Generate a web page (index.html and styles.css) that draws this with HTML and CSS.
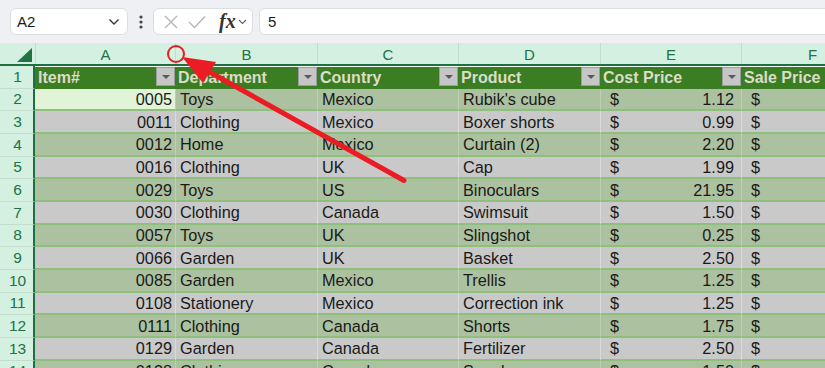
FILE: index.html
```html
<!DOCTYPE html>
<html lang="en">
<head>
    <meta charset="UTF-8">
    <title>Inventory</title>
    <link rel="stylesheet" href="styles.css">
</head>
<body>
    <!-- formula bar -->
    <div class="toolbar">
        <div class="namebox">
            <span>A2</span>
            <svg class="chev" width="12" height="8" viewBox="0 0 12 8"><path d="M1.5 1.5 L6 6 L10.5 1.5" fill="none" stroke="#333" stroke-width="1.4"/></svg>
        </div>
        <div class="more">
            <svg width="4" height="14" viewBox="0 0 4 14"><circle cx="2" cy="2" r="1.6" fill="#444"/><circle cx="2" cy="7" r="1.6" fill="#444"/><circle cx="2" cy="12" r="1.6" fill="#444"/></svg>
        </div>
        <div class="fxbox">
            <svg width="14" height="14" viewBox="0 0 14 14"><path d="M1 1 L13 13 M13 1 L1 13" stroke="#b4b4b4" stroke-width="1.3"/></svg>
            <svg width="18" height="14" viewBox="0 0 18 14"><path d="M1 7 L6.5 12.5 L17 1.5" fill="none" stroke="#b4b4b4" stroke-width="1.3"/></svg>
            <span class="fx">fx</span>
            <svg width="9" height="6" viewBox="0 0 9 6"><path d="M1 1 L4.5 4.5 L8 1" fill="none" stroke="#666" stroke-width="1.2"/></svg>
        </div>
        <div class="formula">5</div>
    </div>

    <!-- sheet -->
    <div class="sheet">
        <div class="row colhead">
            <div class="corner"><span class="tri"></span></div>
            <div>A</div><div>B</div><div>C</div><div>D</div><div>E</div><div>F</div>
        </div>

        <div class="row head">
            <div class="rh">1</div>
            <div class="hc"><span>Item#</span><i class="dd"></i></div>
            <div class="hc"><span>Department</span><i class="dd"></i></div>
            <div class="hc"><span>Country</span><i class="dd"></i></div>
            <div class="hc"><span>Product</span><i class="dd"></i></div>
            <div class="hc"><span>Cost Price</span><i class="dd"></i></div>
            <div class="hc"><span>Sale Price</span><i class="dd"></i></div>
        </div>

        <div class="row green">
            <div class="rh">2</div><div class="num active">0005</div><div>Toys</div><div>Mexico</div><div>Rubik's cube</div>
            <div class="money"><span>$</span><span>1.12</span></div><div class="money"><span>$</span></div>
        </div>
        <div class="row gray">
            <div class="rh">3</div><div class="num">0011</div><div>Clothing</div><div>Mexico</div><div>Boxer shorts</div>
            <div class="money"><span>$</span><span>0.99</span></div><div class="money"><span>$</span></div>
        </div>
        <div class="row green">
            <div class="rh">4</div><div class="num">0012</div><div>Home</div><div>Mexico</div><div>Curtain (2)</div>
            <div class="money"><span>$</span><span>2.20</span></div><div class="money"><span>$</span></div>
        </div>
        <div class="row gray">
            <div class="rh">5</div><div class="num">0016</div><div>Clothing</div><div>UK</div><div>Cap</div>
            <div class="money"><span>$</span><span>1.99</span></div><div class="money"><span>$</span></div>
        </div>
        <div class="row green">
            <div class="rh">6</div><div class="num">0029</div><div>Toys</div><div>US</div><div>Binoculars</div>
            <div class="money"><span>$</span><span>21.95</span></div><div class="money"><span>$</span></div>
        </div>
        <div class="row gray">
            <div class="rh">7</div><div class="num">0030</div><div>Clothing</div><div>Canada</div><div>Swimsuit</div>
            <div class="money"><span>$</span><span>1.50</span></div><div class="money"><span>$</span></div>
        </div>
        <div class="row green">
            <div class="rh">8</div><div class="num">0057</div><div>Toys</div><div>UK</div><div>Slingshot</div>
            <div class="money"><span>$</span><span>0.25</span></div><div class="money"><span>$</span></div>
        </div>
        <div class="row gray">
            <div class="rh">9</div><div class="num">0066</div><div>Garden</div><div>UK</div><div>Basket</div>
            <div class="money"><span>$</span><span>2.50</span></div><div class="money"><span>$</span></div>
        </div>
        <div class="row green">
            <div class="rh">10</div><div class="num">0085</div><div>Garden</div><div>Mexico</div><div>Trellis</div>
            <div class="money"><span>$</span><span>1.25</span></div><div class="money"><span>$</span></div>
        </div>
        <div class="row gray">
            <div class="rh">11</div><div class="num">0108</div><div>Stationery</div><div>Mexico</div><div>Correction ink</div>
            <div class="money"><span>$</span><span>1.25</span></div><div class="money"><span>$</span></div>
        </div>
        <div class="row green">
            <div class="rh">12</div><div class="num">0111</div><div>Clothing</div><div>Canada</div><div>Shorts</div>
            <div class="money"><span>$</span><span>1.75</span></div><div class="money"><span>$</span></div>
        </div>
        <div class="row gray">
            <div class="rh">13</div><div class="num">0129</div><div>Garden</div><div>Canada</div><div>Fertilizer</div>
            <div class="money"><span>$</span><span>2.50</span></div><div class="money"><span>$</span></div>
        </div>
        <div class="row green">
            <div class="rh">14</div><div class="num">0138</div><div>Clothing</div><div>Canada</div><div>Sunglasses</div>
            <div class="money"><span>$</span><span>1.50</span></div><div class="money"><span>$</span></div>
        </div>
    </div>

    <!-- red annotation over the sheet -->
    <svg class="annot" width="825" height="368" viewBox="0 0 825 368">
        <circle cx="176" cy="54" r="8" fill="none" stroke="#ec1c24" stroke-width="2"/>
        <line x1="404" y1="180.5" x2="206" y2="70" stroke="#ec1c24" stroke-width="5" stroke-linecap="round"/>
        <polygon points="182,57 216,62 203,83" fill="#ec1c24"/>
    </svg>
</body>
</html>
```

FILE: styles.css
```css
body {
    margin: 0;
    width: 825px;
    height: 368px;
    overflow: hidden;
    background: #eef0f3;
    font-family: "Liberation Sans", Arial, sans-serif;
    color: #1a1a1a;
    position: relative;
}

/* ---------- formula bar ---------- */
.toolbar {
    height: 43px;
    box-sizing: border-box;
    padding: 8px 0 0 10px;
    display: flex;
    align-items: flex-start;
}

.namebox,
.fxbox,
.formula {
    height: 27px;
    box-sizing: border-box;
    background: #fff;
    border: 1px solid #dcdde0;
    border-radius: 6px;
    display: flex;
    align-items: center;
}

.namebox {
    width: 118px;
    padding: 0 7px 0 6px;
    justify-content: space-between;
    font-size: 15px;
}

.more {
    width: 25px;
    height: 27px;
    display: flex;
    align-items: center;
    justify-content: center;
}

.fxbox {
    width: 100px;
    padding: 0 4px 0 10px;
    gap: 10px;
}

.fx {
    font-family: "Liberation Serif", serif;
    font-style: italic;
    font-weight: bold;
    font-size: 20px;
    color: #333;
    margin-left: 3px;
    margin-right: -8px;
}

.formula {
    flex: 1;
    margin-left: 6px;
    margin-right: -10px;
    padding-left: 8px;
    font-size: 15px;
}

/* ---------- sheet ---------- */
.row {
    display: grid;
    grid-template-columns: 35px 140px 142px 141px 142px 141px 142px;
    height: 22.67px;
    box-sizing: border-box;
    font-size: 16.3px;
}

.row > div {
    display: flex;
    align-items: center;
    padding: 1px 4px 0;
    white-space: nowrap;
    overflow: hidden;
    box-sizing: border-box;
}

.colhead {
    height: 23px;
    background: #d3f0e0;
    border-bottom: 2px solid #1f7040;
    font-size: 15px;
}

.colhead > div {
    justify-content: center;
    color: #217346;
    border-left: 1px solid #c3ddcd;
}

.colhead > .corner {
    border-left: none;
    justify-content: flex-end;
    align-items: flex-end;
    padding: 0 3px 2px 0;
}

.tri {
    width: 0;
    height: 0;
    border-left: 15px solid transparent;
    border-bottom: 14px solid #217346;
}

.rh {
    background: #d3f0e0;
    color: #217346;
    font-size: 15.5px;
    justify-content: center;
    border-right: 2px solid #1f7040;
    border-bottom: 1px solid #c3ddcd;
}

.row > .rh {
    padding: 0 0 0 2px;
}

/* table header row */
.head {
    background: #3b7d23;
    border-top: 1px solid #f4f8f2;
}

.head > .rh {
    margin-top: -1px;
    height: 22.67px;
}

.head > .hc {
    justify-content: space-between;
    align-items: flex-start;
    padding: 0 0 0 3px;
    font-weight: bold;
    font-size: 16px;
    color: #dcdcc8;
}

.hc span {
    padding-top: 2px;
}

.dd {
    width: 19px;
    height: 19px;
    box-sizing: border-box;
    background: #c6c6c6;
    border: 1px solid #9d9d9d;
    display: flex;
    align-items: center;
    justify-content: center;
    flex-shrink: 0;
}

.dd::after {
    content: "";
    border-left: 4px solid transparent;
    border-right: 4px solid transparent;
    border-top: 4px solid #595959;
}

/* banded data rows */
.green > div:not(.rh) {
    background: #acc1a0;
    border-bottom: 2px solid #8dc07b;
}

.gray > div:not(.rh) {
    background: #c9c9c9;
    border-bottom: 2px solid #8dc07b;
}

.green > div:not(.rh):not(.num) {
    border-left: 1px solid #bcd0b2;
}

.gray > div:not(.rh):not(.num) {
    border-left: 1px solid #dadada;
}

.row > .num {
    justify-content: flex-end;
    padding-right: 3px;
}

.green > div.active:not(.rh) {
    background: #e2f4d7;
}

.row > .money {
    justify-content: space-between;
    padding: 1px 7px 0 9px;
}

/* annotation overlay */
.annot {
    position: absolute;
    left: 0;
    top: 0;
    pointer-events: none;
}
```
